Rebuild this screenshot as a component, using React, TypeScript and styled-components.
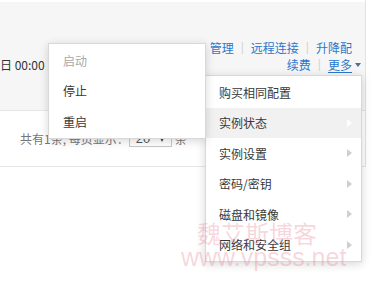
import React from 'react';
import styled, { createGlobalStyle } from 'styled-components';

const GlobalStyle = createGlobalStyle`
  html, body {
    margin: 0;
    padding: 0;
    background: #ffffff;
    font-family: 'Noto Sans CJK SC', 'Liberation Sans', sans-serif;
    font-size: 12px;
    color: #333;
  }
`;

const Page = styled.div`
  position: relative;
  width: 378px;
  height: 290px;
  overflow: hidden;
  background: #fff;
`;

const Panel = styled.div`
  width: 365px;
  padding-top: 2px;
  border-right: 1px solid #e2e2e2;
`;

const TopRow = styled.div`
  height: 109px;
  box-sizing: border-box;
  padding: 37px 13px 0 0;
  background: #f6f6f6;
  border-bottom: 1px solid #e6e6e6;
  display: flex;
  justify-content: space-between;
  align-items: flex-start;
`;

const DateText = styled.div`
  margin-top: 17px;
  line-height: 17px;
  color: #333;
  white-space: nowrap;
`;

const Links = styled.div`
  display: flex;
  flex-direction: column;
  align-items: flex-end;
`;

const LinkLine = styled.div`
  display: flex;
  align-items: center;
  height: 17px;
  line-height: 17px;
`;

const Link = styled.a`
  color: #2b77cc;
  text-decoration: none;
  white-space: nowrap;
`;

const MoreLink = styled(Link)`
  position: relative;
  text-decoration: underline;
  text-underline-offset: 2px;
  &::after {
    content: '';
    position: absolute;
    right: -9px;
    top: 7px;
    border-left: 3.5px solid transparent;
    border-right: 3.5px solid transparent;
    border-top: 4px solid #4c6f95;
  }
`;

const Sep = styled.span`
  color: #d4d4d4;
  margin: 0 7px;
  font-family: 'Liberation Sans', sans-serif;
`;

const PagerRow = styled.div`
  height: 56px;
  box-sizing: border-box;
  border-bottom: 1px solid #e6e6e6;
  display: flex;
  align-items: center;
  padding: 0 0 0 20px;
  color: #777;
`;

const PageSelect = styled.div`
  display: flex;
  align-items: center;
  justify-content: space-between;
  width: 43px;
  height: 16px;
  box-sizing: border-box;
  margin: 0 3px 0 0;
  padding: 0 6px;
  border: 1px solid #c8c8c8;
  color: #555;
  font-family: 'Liberation Sans', sans-serif;
  font-size: 13px;
`;

const SelectCaret = styled.span`
  width: 0;
  height: 0;
  border-left: 3.5px solid transparent;
  border-right: 3.5px solid transparent;
  border-top: 6px solid #444;
`;

const Menu = styled.div<{ $left: number; $top: number; $width: number; $z: number }>`
  position: absolute;
  left: ${({ $left }) => $left}px;
  top: ${({ $top }) => $top}px;
  width: ${({ $width }) => $width}px;
  z-index: ${({ $z }) => $z};
  box-sizing: border-box;
  padding: 1px 0;
  background: #fff;
  border: 1px solid #d8d8d8;
  box-shadow: 0 2px 9px rgba(0, 0, 0, 0.16);
`;

const MenuItem = styled.div<{ $disabled?: boolean; $active?: boolean; $pad: number }>`
  position: relative;
  display: flex;
  align-items: center;
  height: 30.5px;
  padding-left: ${({ $pad }) => $pad}px;
  background: ${({ $active }) => ($active ? '#f1f1f1' : '#fff')};
  color: ${({ $disabled }) => ($disabled ? '#a8a8a8' : '#383838')};
  white-space: nowrap;
`;

const Arrow = styled.span<{ $active?: boolean }>`
  position: absolute;
  right: 9px;
  top: 11px;
  width: 0;
  height: 0;
  border-top: 4.5px solid transparent;
  border-bottom: 4.5px solid transparent;
  border-left: 5px solid ${({ $active }) => ($active ? '#ffffff' : '#cfcfcf')};
`;

const Watermark = styled.div`
  position: absolute;
  left: 181px;
  top: 219px;
  z-index: 5;
  pointer-events: none;
  color: rgba(232, 130, 150, 0.32);
  display: flex;
  flex-direction: column;
`;

const WmTitle = styled.div`
  margin-left: 16px;
  font-size: 24px;
  line-height: 27px;
`;

const WmUrl = styled.div`
  font-family: 'Liberation Sans', sans-serif;
  font-size: 25px;
  line-height: 22px;
`;

const stateItems = [
  { label: '启动', disabled: true },
  { label: '停止' },
  { label: '重启' },
];

const moreItems = [
  { label: '购买相同配置', sub: false },
  { label: '实例状态', sub: true, active: true },
  { label: '实例设置', sub: true },
  { label: '密码/密钥', sub: true },
  { label: '磁盘和镜像', sub: true },
  { label: '网络和安全组', sub: true },
];

const App: React.FC = () => {
  return (
    <Page>
      <GlobalStyle />
      <Panel>
        <TopRow>
          <DateText>日 00:00 到</DateText>
          <Links>
            <LinkLine>
              <Link>管理</Link>
              <Sep>|</Sep>
              <Link>远程连接</Link>
              <Sep>|</Sep>
              <Link>升降配</Link>
            </LinkLine>
            <LinkLine>
              <Link>续费</Link>
              <Sep>|</Sep>
              <MoreLink>更多</MoreLink>
            </LinkLine>
          </Links>
        </TopRow>
        <PagerRow>
          共有1条, 每页显示：
          <PageSelect>
            20
            <SelectCaret />
          </PageSelect>
          条
        </PagerRow>
      </Panel>

      <Menu $left={48} $top={43} $width={158} $z={3}>
        {stateItems.map((item) => (
          <MenuItem key={item.label} $pad={14} $disabled={item.disabled}>
            {item.label}
          </MenuItem>
        ))}
      </Menu>

      <Menu $left={205} $top={75} $width={157} $z={2}>
        {moreItems.map((item) => (
          <MenuItem key={item.label} $pad={13} $active={item.active}>
            {item.label}
            {item.sub && <Arrow $active={item.active} />}
          </MenuItem>
        ))}
      </Menu>

      <Watermark>
        <WmTitle>魏艾斯博客</WmTitle>
        <WmUrl>www.vpsss.net</WmUrl>
      </Watermark>
    </Page>
  );
};

export default App;
